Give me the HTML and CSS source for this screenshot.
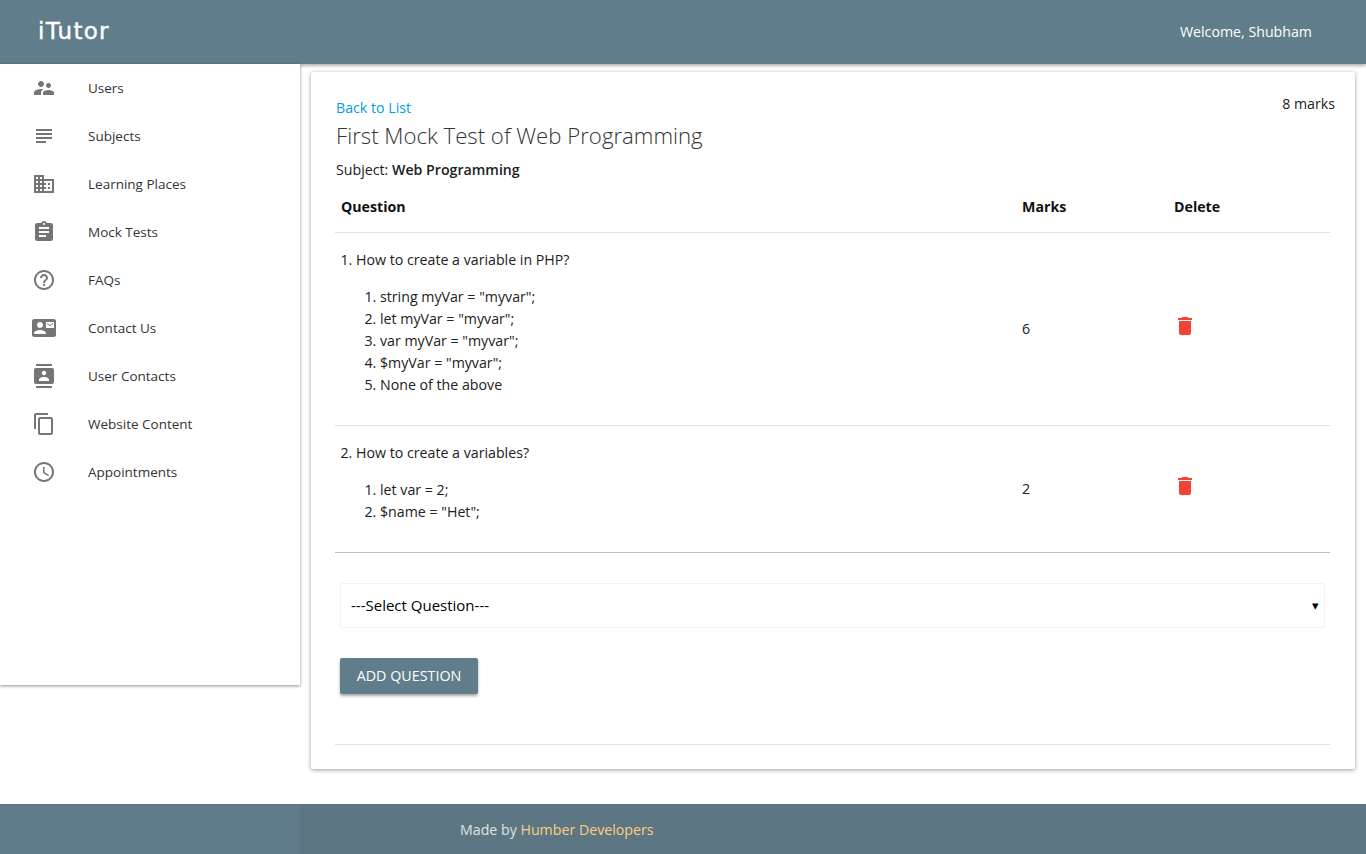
FILE: index.html
```html
<!DOCTYPE html>
<html lang="en">
<head>
    <meta charset="UTF-8">
    <meta name="viewport" content="width=device-width, initial-scale=1.0">
    <title>iTutor</title>
    <link rel="stylesheet" href="styles.css">
</head>
<body>

<header class="topbar">
    <div class="brand">iTutor</div>
    <div class="welcome">Welcome, Shubham</div>
</header>

<div class="page">
    <nav class="sidebar">
        <a class="nav-item" href="#">
            <svg class="nav-icon" viewBox="0 0 24 24"><path d="M16.5 12c1.38 0 2.49-1.12 2.49-2.5S17.88 7 16.5 7C15.12 7 14 8.12 14 9.5s1.12 2.5 2.5 2.5zM9 11c1.66 0 2.99-1.34 2.99-3S10.66 5 9 5C7.34 5 6 6.34 6 8s1.34 3 3 3zm7.5 3c-1.83 0-5.5.92-5.5 2.75V19h11v-2.25c0-1.83-3.67-2.75-5.5-2.75zM9 13c-2.33 0-7 1.17-7 3.5V19h7v-2.25c0-.85.33-2.34 2.37-3.47C10.5 13.1 9.66 13 9 13z"/></svg>
            Users
        </a>
        <a class="nav-item" href="#">
            <svg class="nav-icon" viewBox="0 0 24 24"><path d="M14 17H4v2h10v-2zm6-8H4v2h16V9zM4 15h16v-2H4v2zM4 5v2h16V5H4z"/></svg>
            Subjects
        </a>
        <a class="nav-item" href="#">
            <svg class="nav-icon" viewBox="0 0 24 24"><path d="M12 7V3H2v18h20V7H12zM6 19H4v-2h2v2zm0-4H4v-2h2v2zm0-4H4V9h2v2zm0-4H4V5h2v2zm4 12H8v-2h2v2zm0-4H8v-2h2v2zm0-4H8V9h2v2zm0-4H8V5h2v2zm10 12h-8v-2h2v-2h-2v-2h2v-2h-2V9h8v10zm-2-8h-2v2h2v-2zm0 4h-2v2h2v-2z"/></svg>
            Learning Places
        </a>
        <a class="nav-item" href="#">
            <svg class="nav-icon" viewBox="0 0 24 24"><path d="M19 3h-4.18C14.4 1.84 13.3 1 12 1c-1.3 0-2.4.84-2.82 2H5c-1.1 0-2 .9-2 2v14c0 1.1.9 2 2 2h14c1.1 0 2-.9 2-2V5c0-1.1-.9-2-2-2zm-7 0c.55 0 1 .45 1 1s-.45 1-1 1-1-.45-1-1 .45-1 1-1zm2 14H7v-2h7v2zm3-4H7v-2h10v2zm0-4H7V7h10v2z"/></svg>
            Mock Tests
        </a>
        <a class="nav-item" href="#">
            <svg class="nav-icon" viewBox="0 0 24 24"><path d="M11 18h2v-2h-2v2zm1-16C6.48 2 2 6.48 2 12s4.48 10 10 10 10-4.48 10-10S17.52 2 12 2zm0 18c-4.41 0-8-3.59-8-8s3.59-8 8-8 8 3.59 8 8-3.59 8-8 8zm0-14c-2.21 0-4 1.79-4 4h2c0-1.1.9-2 2-2s2 .9 2 2c0 2-3 1.75-3 5h2c0-2.25 3-2.5 3-5 0-2.21-1.79-4-4-4z"/></svg>
            FAQs
        </a>
        <a class="nav-item" href="#">
            <svg class="nav-icon" viewBox="0 0 24 24"><path d="M21 8V7l-3 2-3-2v1l3 2 3-2zm1-5H2C.9 3 0 3.9 0 5v14c0 1.1.9 2 2 2h20c1.1 0 1.99-.9 1.99-2L24 5c0-1.1-.9-2-2-2zM8 6c1.66 0 3 1.34 3 3s-1.34 3-3 3-3-1.34-3-3 1.34-3 3-3zm6 12H2v-1c0-2 4-3.1 6-3.1s6 1.1 6 3.1v1zm8-6h-8V6h8v6z"/></svg>
            Contact Us
        </a>
        <a class="nav-item" href="#">
            <svg class="nav-icon" viewBox="0 0 24 24"><path d="M20 0H4v2h16V0zM4 24h16v-2H4v2zM20 4H4c-1.1 0-2 .9-2 2v12c0 1.1.9 2 2 2h16c1.1 0 2-.9 2-2V6c0-1.1-.9-2-2-2zm-8 2.75c1.24 0 2.25 1.01 2.25 2.25s-1.01 2.25-2.25 2.25S9.75 10.24 9.75 9 10.76 6.75 12 6.75zM17 17H7v-1.5c0-1.67 3.33-2.5 5-2.5s5 .83 5 2.5V17z"/></svg>
            User Contacts
        </a>
        <a class="nav-item" href="#">
            <svg class="nav-icon" viewBox="0 0 24 24"><path d="M16 1H4c-1.1 0-2 .9-2 2v14h2V3h12V1zm3 4H8c-1.1 0-2 .9-2 2v14c0 1.1.9 2 2 2h11c1.1 0 2-.9 2-2V7c0-1.1-.9-2-2-2zm0 16H8V7h11v14z"/></svg>
            Website Content
        </a>
        <a class="nav-item" href="#">
            <svg class="nav-icon" viewBox="0 0 24 24"><path d="M11.99 2C6.47 2 2 6.48 2 12s4.47 10 9.99 10C17.52 22 22 17.52 22 12S17.52 2 11.99 2zM12 20c-4.42 0-8-3.58-8-8s3.58-8 8-8 8 3.58 8 8-3.58 8-8 8zm.5-13H11v6l5.25 3.15.75-1.23-4.5-2.67z"/></svg>
            Appointments
        </a>
    </nav>

    <main class="content">
        <section class="card">
            <div class="card-top">
                <a class="back-link" href="#">Back to List</a>
                <span class="total-marks">8 marks</span>
            </div>
            <h1 class="test-title">First Mock Test of Web Programming</h1>
            <p class="test-subject">Subject: <b>Web Programming</b></p>

            <table class="question-table">
                <thead>
                    <tr>
                        <th class="col-question">Question</th>
                        <th class="col-marks">Marks</th>
                        <th>Delete</th>
                    </tr>
                </thead>
                <tbody>
                    <tr>
                        <td>
                            <ol class="question" start="1">
                                <li>How to create a variable in PHP?
                                    <ol class="options">
                                        <li>string myVar = "myvar";</li>
                                        <li>let myVar = "myvar";</li>
                                        <li>var myVar = "myvar";</li>
                                        <li>$myVar = "myvar";</li>
                                        <li>None of the above</li>
                                    </ol>
                                </li>
                            </ol>
                        </td>
                        <td>6</td>
                        <td><svg class="trash" viewBox="0 0 24 24"><path d="M6 19c0 1.1.9 2 2 2h8c1.1 0 2-.9 2-2V7H6v12zM19 4h-3.5l-1-1h-5l-1 1H5v2h14V4z"/></svg></td>
                    </tr>
                    <tr>
                        <td>
                            <ol class="question" start="2">
                                <li>How to create a variables?
                                    <ol class="options">
                                        <li>let var = 2;</li>
                                        <li>$name = "Het";</li>
                                    </ol>
                                </li>
                            </ol>
                        </td>
                        <td>2</td>
                        <td><svg class="trash" viewBox="0 0 24 24"><path d="M6 19c0 1.1.9 2 2 2h8c1.1 0 2-.9 2-2V7H6v12zM19 4h-3.5l-1-1h-5l-1 1H5v2h14V4z"/></svg></td>
                    </tr>
                </tbody>
            </table>

            <form class="add-form">
                <div class="select-box">
                    <span>---Select Question---</span>
                    <span class="select-arrow">&#9662;</span>
                </div>
                <button type="button" class="add-button">ADD QUESTION</button>
            </form>
            <div class="card-end"></div>
        </section>
    </main>
</div>

<footer class="footer">
    <div class="footer-side"></div>
    <div class="footer-main">Made by <a href="#">Humber Developers</a></div>
</footer>

</body>
</html>
```

FILE: styles.css
```css
* {
    box-sizing: border-box;
}
body {
    margin: 0;
    font-family: 'Open Sans', sans-serif;
    font-size: 14.2px;
    line-height: 22px;
    color: #212121;
    background: #fff;
}
a {
    text-decoration: none;
}

/* top bar */
.topbar {
    display: flex;
    justify-content: space-between;
    align-items: center;
    height: 64px;
    background: #607d8b;
    color: #fff;
    box-shadow: 0 2px 3px rgba(0, 0, 0, 0.3);
    position: relative;
    z-index: 2;
}
.brand {
    width: 300px;
    height: 64px;
    padding-left: 38px;
    font-family: 'DejaVu Sans', sans-serif;
    font-size: 23px;
    line-height: 62px;
    letter-spacing: 1.3px;
    -webkit-text-stroke: 0.4px #fff;
}
.welcome {
    padding-right: 54px;
    font-weight: 500;
}

/* main area */
.page {
    display: flex;
    align-items: flex-start;
    height: 740px;
}
.sidebar {
    flex: 0 0 300px;
    height: 621px;
    background: #fff;
    box-shadow: 0 1px 3px rgba(0, 0, 0, 0.45);
    position: relative;
    z-index: 3;
}
.nav-item {
    display: flex;
    align-items: center;
    height: 48px;
    padding-left: 32px;
    color: #333;
    font-weight: 500;
    font-size: 13.5px;
}
.nav-icon {
    width: 24px;
    height: 24px;
    margin-right: 32px;
    fill: #757575;
}
.content {
    flex: 1;
    padding: 8px 11px 0;
}
.card {
    height: 697px;
    padding: 24px 25px 0 24px;
    border-radius: 2px;
    background: #fff;
    box-shadow: 0 1px 4px rgba(0, 0, 0, 0.4);
}
.card-top {
    display: flex;
    justify-content: space-between;
    height: 24px;
}
.back-link {
    color: #039be5;
    padding: 1px 0 0 1px;
}
.total-marks {
    margin-right: -5px;
    margin-top: -3px;
}
.test-title {
    margin: 0;
    padding-left: 1px;
    font-size: 22.2px;
    font-weight: 300;
    line-height: 32px;
    color: #333;
}
.test-subject {
    margin: 7px 0 0;
    padding-left: 1px;
}
.test-subject b {
    font-weight: 600;
}

/* question table */
.question-table {
    width: 100%;
    margin-top: 5px;
    border-collapse: collapse;
}
.question-table th {
    height: 46px;
    padding: 0 5px 3px;
    text-align: left;
    font-weight: 700;
    color: #111;
    border-bottom: 1px solid #e0e0e0;
}
.question-table th.col-question {
    width: 682px;
    padding-left: 6px;
}
.col-marks {
    width: 152px;
}
.question-table td {
    padding: 0 5px;
    vertical-align: middle;
    border-bottom: 1px solid #e0e0e0;
}
.question-table tbody tr:last-child td {
    border-bottom-color: #bdbdbd;
}
.question {
    margin: 16px 0 29px;
    padding-left: 16px;
}
.options {
    margin: 15px 0 0;
    padding-left: 24px;
}
.trash {
    display: block;
    width: 24px;
    height: 24px;
    margin: -6px 0 0 -1px;
    fill: #f44336;
}

/* add question form */
.add-form {
    padding: 30px 5px 0;
}
.select-box {
    display: flex;
    justify-content: space-between;
    align-items: center;
    height: 45px;
    padding: 0 5px 0 10px;
    border: 1px solid #f2f2f2;
    border-radius: 2px;
    color: #000;
    font-size: 15px;
}
.select-arrow {
    font-size: 13px;
}
.add-button {
    display: block;
    width: 138px;
    height: 36px;
    margin-top: 30px;
    border: none;
    border-radius: 2px;
    background: #607d8b;
    color: #fff;
    font-family: inherit;
    font-size: 14.3px;
    box-shadow: 0 2px 3px rgba(0, 0, 0, 0.35);
}
.card-end {
    margin-top: 50px;
    border-top: 1px solid #e0e0e0;
}

/* footer */
.footer {
    display: flex;
    height: 50px;
    background: #5c7783;
    color: #e0e0e0;
}
.footer-side {
    width: 300px;
    background: #5f7b89;
}
.footer-main {
    padding-left: 160px;
    line-height: 52px;
}
.footer-main a {
    color: #ffcc80;
}
```
